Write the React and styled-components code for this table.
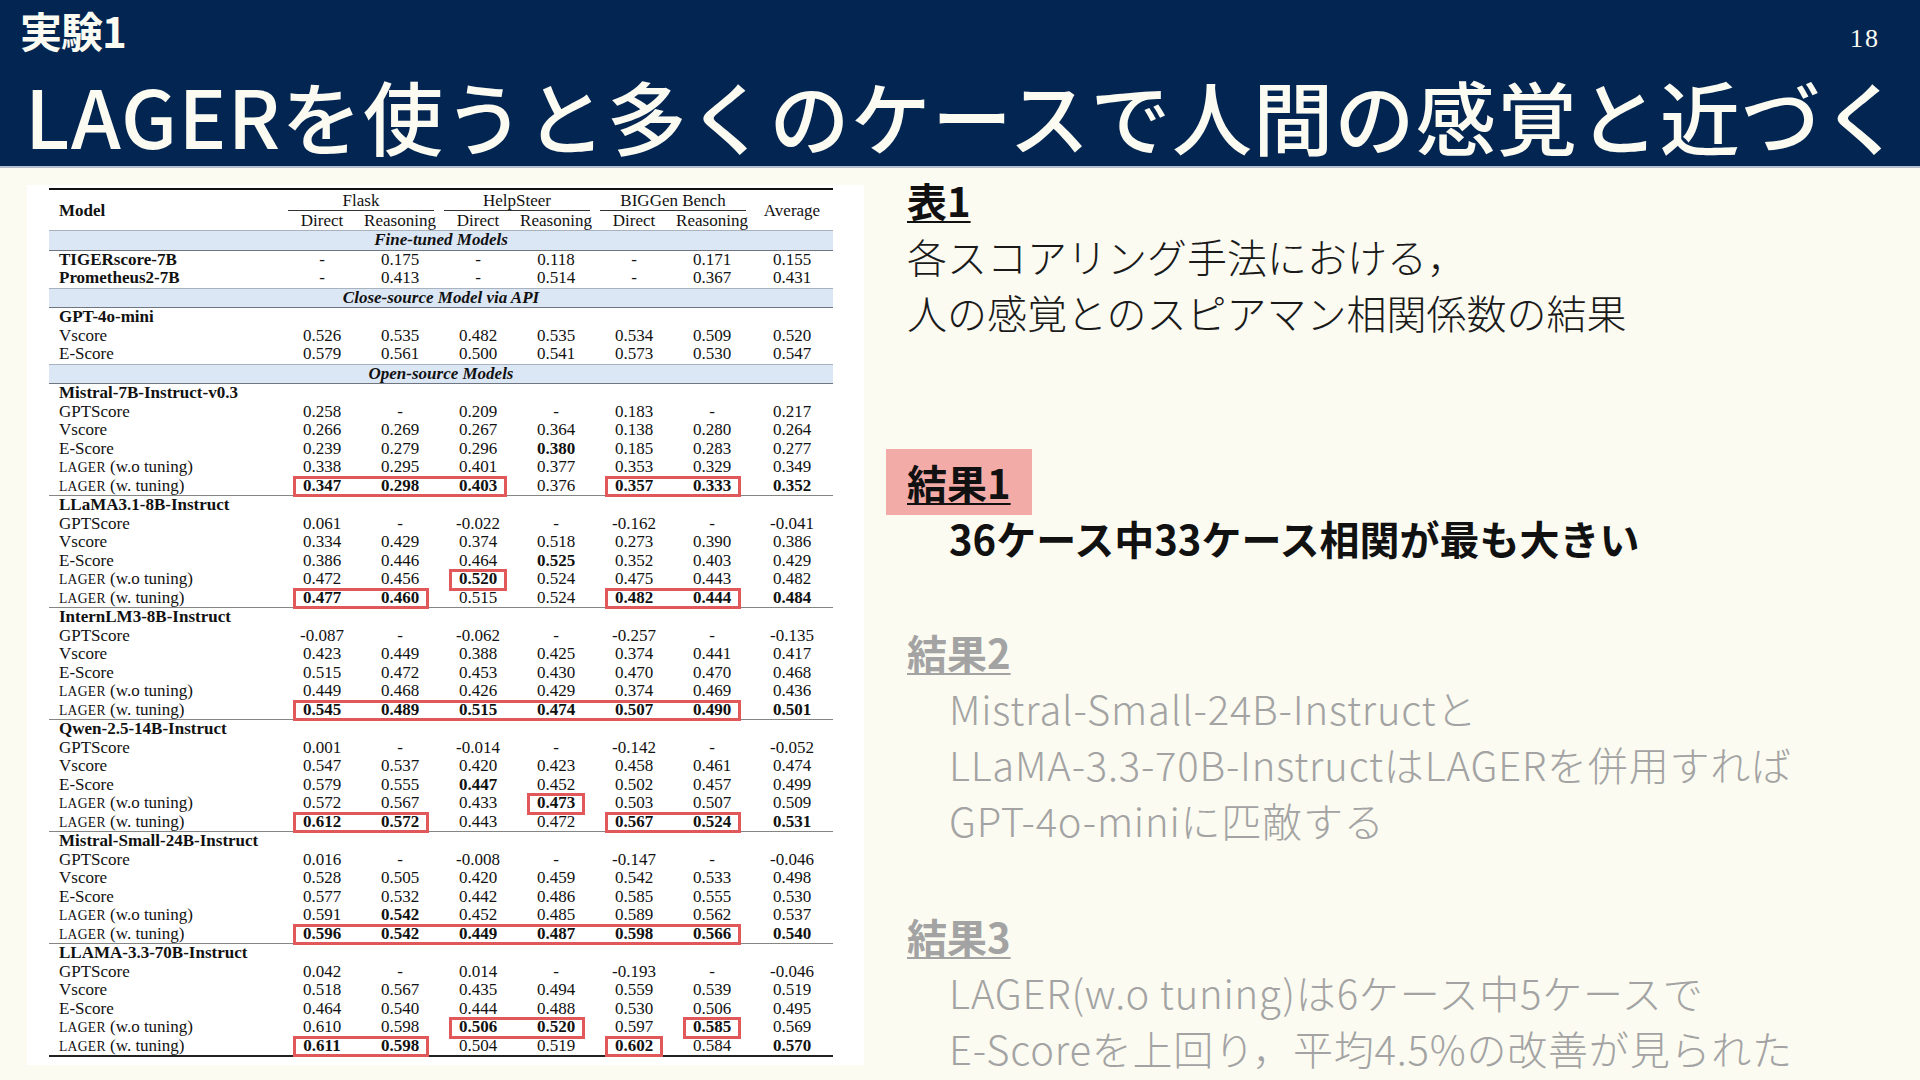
import React from "react";
import styled, { createGlobalStyle } from "styled-components";

const GlobalStyle = createGlobalStyle`
  html, body {
    margin: 0;
    padding: 0;
    background: #fbfbf1;
  }
  body {
    font-family: "Noto Sans CJK JP", "Noto Sans", sans-serif;
    overflow: hidden;
  }
`;

const GRID = "234px repeat(6, 78px) 82px";
const ROW_H = "18.5px";

// 表のデータ ("*" で始まる値は太字)
const topModels = [
  { name: "TIGERscore-7B", values: ["-", "0.175", "-", "0.118", "-", "0.171", "0.155"] },
  { name: "Prometheus2-7B", values: ["-", "0.413", "-", "0.514", "-", "0.367", "0.431"] },
];

const apiRows = [
  { name: "Vscore", values: ["0.526", "0.535", "0.482", "0.535", "0.534", "0.509", "0.520"] },
  { name: "E-Score", values: ["0.579", "0.561", "0.500", "0.541", "0.573", "0.530", "0.547"] },
];

const groups = [
  {
    name: "Mistral-7B-Instruct-v0.3",
    rows: [
      ["0.258", "-", "0.209", "-", "0.183", "-", "0.217"],
      ["0.266", "0.269", "0.267", "0.364", "0.138", "0.280", "0.264"],
      ["0.239", "0.279", "0.296", "*0.380", "0.185", "0.283", "0.277"],
      ["0.338", "0.295", "0.401", "0.377", "0.353", "0.329", "0.349"],
      ["*0.347", "*0.298", "*0.403", "0.376", "*0.357", "*0.333", "*0.352"],
    ],
    boxes: [[4, 1, 3], [4, 5, 6]],
  },
  {
    name: "LLaMA3.1-8B-Instruct",
    rows: [
      ["0.061", "-", "-0.022", "-", "-0.162", "-", "-0.041"],
      ["0.334", "0.429", "0.374", "0.518", "0.273", "0.390", "0.386"],
      ["0.386", "0.446", "0.464", "*0.525", "0.352", "0.403", "0.429"],
      ["0.472", "0.456", "*0.520", "0.524", "0.475", "0.443", "0.482"],
      ["*0.477", "*0.460", "0.515", "0.524", "*0.482", "*0.444", "*0.484"],
    ],
    boxes: [[3, 3, 3], [4, 1, 2], [4, 5, 6]],
  },
  {
    name: "InternLM3-8B-Instruct",
    rows: [
      ["-0.087", "-", "-0.062", "-", "-0.257", "-", "-0.135"],
      ["0.423", "0.449", "0.388", "0.425", "0.374", "0.441", "0.417"],
      ["0.515", "0.472", "0.453", "0.430", "0.470", "0.470", "0.468"],
      ["0.449", "0.468", "0.426", "0.429", "0.374", "0.469", "0.436"],
      ["*0.545", "*0.489", "*0.515", "*0.474", "*0.507", "*0.490", "*0.501"],
    ],
    boxes: [[4, 1, 6]],
  },
  {
    name: "Qwen-2.5-14B-Instruct",
    rows: [
      ["0.001", "-", "-0.014", "-", "-0.142", "-", "-0.052"],
      ["0.547", "0.537", "0.420", "0.423", "0.458", "0.461", "0.474"],
      ["0.579", "0.555", "*0.447", "0.452", "0.502", "0.457", "0.499"],
      ["0.572", "0.567", "0.433", "*0.473", "0.503", "0.507", "0.509"],
      ["*0.612", "*0.572", "0.443", "0.472", "*0.567", "*0.524", "*0.531"],
    ],
    boxes: [[3, 4, 4], [4, 1, 2], [4, 5, 6]],
  },
  {
    name: "Mistral-Small-24B-Instruct",
    rows: [
      ["0.016", "-", "-0.008", "-", "-0.147", "-", "-0.046"],
      ["0.528", "0.505", "0.420", "0.459", "0.542", "0.533", "0.498"],
      ["0.577", "0.532", "0.442", "0.486", "0.585", "0.555", "0.530"],
      ["0.591", "*0.542", "0.452", "0.485", "0.589", "0.562", "0.537"],
      ["*0.596", "*0.542", "*0.449", "*0.487", "*0.598", "*0.566", "*0.540"],
    ],
    boxes: [[4, 1, 6]],
  },
  {
    name: "LLAMA-3.3-70B-Instruct",
    rows: [
      ["0.042", "-", "0.014", "-", "-0.193", "-", "-0.046"],
      ["0.518", "0.567", "0.435", "0.494", "0.559", "0.539", "0.519"],
      ["0.464", "0.540", "0.444", "0.488", "0.530", "0.506", "0.495"],
      ["0.610", "0.598", "*0.506", "*0.520", "0.597", "*0.585", "0.569"],
      ["*0.611", "*0.598", "0.504", "0.519", "*0.602", "0.584", "*0.570"],
    ],
    boxes: [[3, 3, 4], [3, 6, 6], [4, 1, 2], [4, 5, 5]],
  },
];

const methods = [
  "GPTScore",
  "Vscore",
  "E-Score",
  <>
    <SmallCaps>LAGER</SmallCaps> (w.o tuning)
  </>,
  <>
    <SmallCaps>LAGER</SmallCaps> (w. tuning)
  </>,
];

function SmallCaps({ children }) {
  return <Caps>{children}</Caps>;
}

function DataRow({ label, bold, values = [], boxes = [] }) {
  return (
    <Row>
      <NameCell $bold={bold}>{label}</NameCell>
      {values.map((v, i) => (
        <Cell key={i} $col={i + 2} $bold={v.startsWith("*")}>
          {v.replace("*", "")}
        </Cell>
      ))}
      {boxes.map(([from, to]) => (
        <HighlightBox key={`${from}-${to}`} $from={from + 1} $to={to + 2} />
      ))}
    </Row>
  );
}

export default function App() {
  return (
    <>
      <GlobalStyle />
      <Slide>
        <Header>
          <HeaderTop>
            <Kicker>実験1</Kicker>
            <PageNo>18</PageNo>
          </HeaderTop>
          <Title>LAGERを使うと多くのケースで人間の感覚と近づく</Title>
        </Header>

        <Main>
          <TablePanel>
            <Table>
              <HeadGrid>
                <HeadCell $col="1" $row="1 / 3" $bold $left>
                  Model
                </HeadCell>
                <GroupLabel $col="2 / 4">Flask</GroupLabel>
                <GroupLabel $col="4 / 6">HelpSteer</GroupLabel>
                <GroupLabel $col="6 / 8">BIGGen Bench</GroupLabel>
                <HeadCell $col="8" $row="1 / 3">
                  Average
                </HeadCell>
                {["Direct", "Reasoning", "Direct", "Reasoning", "Direct", "Reasoning"].map(
                  (t, i) => (
                    <HeadCell key={i} $col={i + 2} $row="2">
                      {t}
                    </HeadCell>
                  )
                )}
              </HeadGrid>

              <Band>Fine-tuned Models</Band>
              {topModels.map((m) => (
                <DataRow key={m.name} label={m.name} bold values={m.values} />
              ))}

              <Band>Close-source Model via API</Band>
              <DataRow label="GPT-4o-mini" bold />
              {apiRows.map((r) => (
                <DataRow key={r.name} label={r.name} values={r.values} />
              ))}

              <Band>Open-source Models</Band>
              {groups.map((g, gi) => (
                <Group key={g.name} $last={gi === groups.length - 1}>
                  <DataRow label={g.name} bold />
                  {g.rows.map((vals, ri) => (
                    <DataRow
                      key={ri}
                      label={methods[ri]}
                      values={vals}
                      boxes={g.boxes
                        .filter(([r]) => r === ri)
                        .map(([, from, to]) => [from, to])}
                    />
                  ))}
                </Group>
              ))}
            </Table>
          </TablePanel>

          <Notes>
            <NoteHead>表1</NoteHead>
            <NoteText>
              各スコアリング手法における，
              <br />
              人の感覚とのスピアマン相関係数の結果
            </NoteText>

            <Result $gap="114px">
              <ResultHead $active>結果1</ResultHead>
              <ResultText $active>36ケース中33ケース相関が最も大きい</ResultText>
            </Result>

            <Result $gap="58px">
              <ResultHead>結果2</ResultHead>
              <ResultText>
                Mistral-Small-24B-Instructと
                <br />
                LLaMA-3.3-70B-InstructはLAGERを併用すれば
                <br />
                GPT-4o-miniに匹敵する
              </ResultText>
            </Result>

            <Result $gap="60px">
              <ResultHead>結果3</ResultHead>
              <ResultText>
                LAGER(w.o tuning)は6ケース中5ケースで
                <br />
                E-Scoreを上回り，平均4.5%の改善が見られた
              </ResultText>
            </Result>
          </Notes>
        </Main>
      </Slide>
    </>
  );
}

const Slide = styled.div`
  width: 1920px;
  height: 1080px;
  background: #fbfbf1;
  display: flex;
  flex-direction: column;
  overflow: hidden;
`;

const Header = styled.header`
  height: 168px;
  box-sizing: border-box;
  background: #022552;
  border-bottom: 2px solid #b4c0cf;
  padding: 0 40px 0 20px;
  display: flex;
  flex-direction: column;
  color: #fbfbf1;
`;

const HeaderTop = styled.div`
  height: 60px;
  display: flex;
  align-items: center;
  justify-content: space-between;
`;

const Kicker = styled.div`
  font-size: 42px;
  font-weight: 700;
  line-height: 1;
  letter-spacing: -1px;
`;

const PageNo = styled.div`
  font-family: "Liberation Serif", serif;
  font-size: 26px;
  line-height: 1;
  letter-spacing: 2px;
  margin-top: 18px;
`;

const Title = styled.h1`
  margin: 12px 0 0 5px;
  font-size: 80px;
  font-weight: 500;
  line-height: 84px;
  letter-spacing: 1.3px;
  white-space: nowrap;
`;

const Main = styled.main`
  flex: 1;
  display: flex;
  align-items: flex-start;
  gap: 43px;
`;

const TablePanel = styled.section`
  margin: 17px 0 0 27px;
  width: 837px;
  height: 880px;
  box-sizing: border-box;
  background: #ffffff;
  padding: 3px 0 0 22px;
`;

const Table = styled.div`
  width: 784px;
  border-top: 2px solid #111;
  border-bottom: 2.5px solid #222;
  font-family: "Liberation Serif", "Times New Roman", serif;
  font-size: 17px;
  color: #111;
`;

const HeadGrid = styled.div`
  display: grid;
  grid-template-columns: ${GRID};
  grid-template-rows: 20px 19px;
  line-height: 19px;
  padding-top: 1px;
`;

const HeadCell = styled.div`
  grid-column: ${(p) => p.$col};
  grid-row: ${(p) => p.$row};
  align-self: ${(p) => (p.$row === "2" ? "start" : "center")};
  text-align: ${(p) => (p.$left ? "left" : "center")};
  padding-left: ${(p) => (p.$left ? "10px" : "0")};
  font-weight: ${(p) => (p.$bold ? 700 : 400)};
`;

const GroupLabel = styled.div`
  grid-column: ${(p) => p.$col};
  grid-row: 1;
  text-align: center;
  margin: 0 5px;
  border-bottom: 1px solid #333;
`;

const Band = styled.div`
  height: ${ROW_H};
  line-height: ${ROW_H};
  background: #dce7f6;
  border-top: 1px solid #a9b3c0;
  border-bottom: 1px solid #6f7680;
  text-align: center;
  font-style: italic;
  font-weight: 700;
`;

const Group = styled.div`
  border-bottom: ${(p) => (p.$last ? "none" : "1.5px solid #858585")};
`;

const Row = styled.div`
  display: grid;
  grid-template-columns: ${GRID};
  height: ${ROW_H};
  line-height: ${ROW_H};
`;

const NameCell = styled.div`
  grid-column: 1;
  grid-row: 1;
  padding-left: 10px;
  white-space: nowrap;
  font-weight: ${(p) => (p.$bold ? 700 : 400)};
`;

const Cell = styled.div`
  grid-column: ${(p) => p.$col};
  grid-row: 1;
  text-align: center;
  font-weight: ${(p) => (p.$bold ? 700 : 400)};
`;

const HighlightBox = styled.div`
  grid-column: ${(p) => p.$from} / ${(p) => p.$to};
  grid-row: 1;
  margin: -1px 10px -1px 10px;
  border: 3px solid #e1585a;
  pointer-events: none;
`;

const Caps = styled.span`
  font-size: 0.8em;
  letter-spacing: 0.3px;
`;

const Notes = styled.section`
  margin-top: 4px;
  display: flex;
  flex-direction: column;
  color: #111;
  white-space: nowrap;
`;

const NoteHead = styled.div`
  font-size: 40px;
  font-weight: 700;
  line-height: 56px;
  text-decoration: underline;
  text-decoration-thickness: 2px;
  text-underline-offset: 4px;
  align-self: flex-start;
`;

const NoteText = styled.p`
  margin: 0;
  font-size: 40px;
  font-weight: 300;
  line-height: 56px;
  color: #1a1a1a;
`;

const Result = styled.div`
  margin-top: ${(p) => p.$gap};
  display: flex;
  flex-direction: column;
`;

const ResultHead = styled.div`
  align-self: flex-start;
  font-size: 40px;
  font-weight: 700;
  line-height: 56px;
  color: ${(p) => (p.$active ? "#111" : "#a3a3a3")};
  text-decoration: underline;
  text-decoration-thickness: 2px;
  text-underline-offset: 4px;
  padding: 5px 21px;
  margin: -5px 0 -5px -21px;
  background: ${(p) => (p.$active ? "#f2aba6" : "transparent")};
`;

const ResultText = styled.p`
  margin: 0 0 0 42px;
  font-size: 40px;
  line-height: 56px;
  font-weight: ${(p) => (p.$active ? 700 : 300)};
  letter-spacing: ${(p) => (p.$active ? "0" : "0.8px")};
  color: ${(p) => (p.$active ? "#111" : "#a3a3a3")};
`;
